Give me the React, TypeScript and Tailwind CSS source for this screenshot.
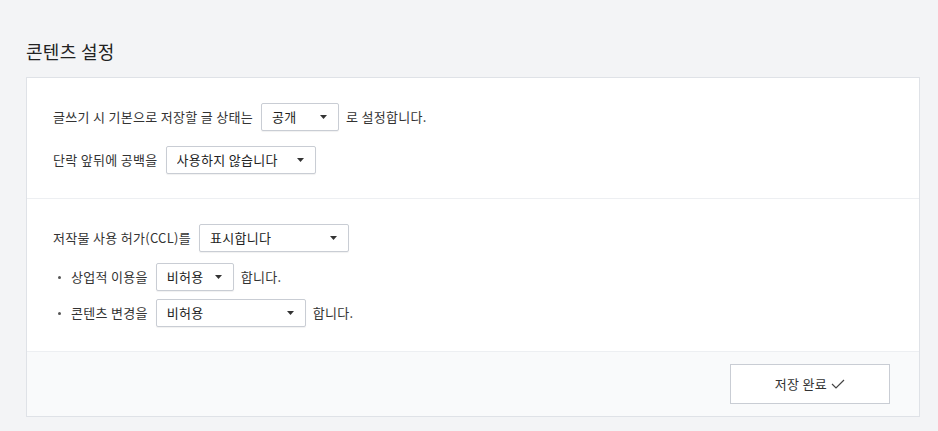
import { useState } from "react";

type SelectProps = {
  value: string;
  options: string[];
  width: string;
  onChange: (v: string) => void;
};

const Select = ({ value, options, width, onChange }: SelectProps) => {
  return (
    <div className={`relative h-[28px] ${width} shrink-0`}>
      <select
        value={value}
        onChange={(e) => onChange(e.target.value)}
        className="h-full w-full appearance-none rounded-[2px] border border-[#c9cdd4] bg-white pl-[10px] pr-6 text-[13px] tracking-[0.3px] text-[#222] shadow-[0_1px_1px_rgba(0,0,0,0.06)] outline-none"
      >
        {options.map((o) => (
          <option key={o} value={o}>
            {o}
          </option>
        ))}
      </select>
      <svg
        width="7"
        height="4"
        viewBox="0 0 7 4"
        className="pointer-events-none absolute right-[12px] top-[12px]"
      >
        <path d="M0 0h7L3.5 4z" fill="#333" />
      </svg>
    </div>
  );
};

const App = () => {
  const [status, setStatus] = useState("공개");
  const [spacing, setSpacing] = useState("사용하지 않습니다");
  const [ccl, setCcl] = useState("표시합니다");
  const [commercial, setCommercial] = useState("비허용");
  const [modify, setModify] = useState("비허용");

  return (
    <div
      className="min-h-[431px] bg-[#f3f4f6] pl-[26px] pr-[18px] pt-[40px] text-[13px] tracking-[0.3px] text-[#333]"
      style={{ fontFamily: '"Noto Sans CJK KR", "Noto Sans", sans-serif' }}
    >
      <h2 className="mb-[14px] h-[23px] text-[18px] leading-[23px] tracking-[0.3px] text-[#222]">콘텐츠 설정</h2>

      <div className="border border-[#dfe2e7] bg-white">
        <div className="flex flex-col gap-[15px] px-[26px] pb-[24px] pt-[25px]">
          <div className="flex items-center">
            <span className="mr-[8px]">글쓰기 시 기본으로 저장할 글 상태는</span>
            <Select value={status} options={["공개", "비공개", "보호"]} width="w-[78px]" onChange={setStatus} />
            <span className="ml-[7px]">로 설정합니다.</span>
          </div>
          <div className="flex items-center">
            <span className="mr-[8px]">단락 앞뒤에 공백을</span>
            <Select value={spacing} options={["사용하지 않습니다", "사용합니다"]} width="w-[150px]" onChange={setSpacing} />
          </div>
        </div>

        <div className="border-t border-[#edeff2] px-[26px] pb-[24px] pt-[25px]">
          <div className="flex items-center">
            <span className="mr-[8px]">저작물 사용 허가(CCL)를</span>
            <Select value={ccl} options={["표시합니다", "표시하지 않습니다"]} width="w-[150px]" onChange={setCcl} />
          </div>
          <ul className="mt-[11px] flex flex-col gap-[8px]">
            <li className="flex items-center">
              <span className="ml-[5px] mr-[10px] h-[3px] w-[3px] rounded-full bg-[#555]" />
              <span className="mr-[8px]">상업적 이용을</span>
              <Select value={commercial} options={["비허용", "허용"]} width="w-[78px]" onChange={setCommercial} />
              <span className="ml-[7px]">합니다.</span>
            </li>
            <li className="flex items-center">
              <span className="ml-[5px] mr-[10px] h-[3px] w-[3px] rounded-full bg-[#555]" />
              <span className="mr-[8px]">콘텐츠 변경을</span>
              <Select value={modify} options={["비허용", "허용", "동일조건 허용"]} width="w-[150px]" onChange={setModify} />
              <span className="ml-[7px]">합니다.</span>
            </li>
          </ul>
        </div>

        <div className="flex justify-end border-t border-[#edeff2] bg-[#f9fafb] px-[29px] py-[12px]">
          <button className="flex h-[40px] w-[160px] items-center justify-center gap-[4px] border border-[#c9cdd4] bg-white text-[13px] text-[#333]">
            저장 완료
            <svg width="14" height="10" viewBox="0 0 14 10" fill="none">
              <path d="M1 5l4 4 8-8" stroke="#444" strokeWidth="1.2" />
            </svg>
          </button>
        </div>
      </div>
    </div>
  );
};

export default App;
